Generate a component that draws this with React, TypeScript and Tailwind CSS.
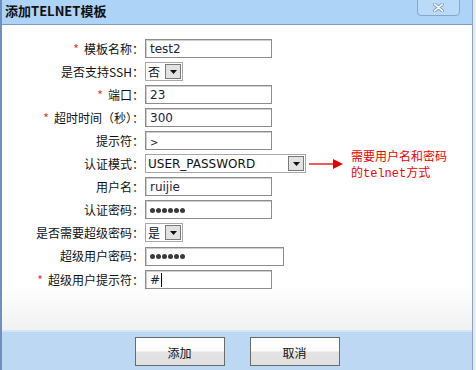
import { ReactNode } from 'react'

const cjk = { fontFamily: '"Noto Sans CJK SC", "DejaVu Sans", sans-serif' }
const latin = { fontFamily: '"DejaVu Sans", "Noto Sans CJK SC", sans-serif' }

function Label({ required, children }: { required?: boolean; children: ReactNode }) {
  return (
    <div className="w-[142px] shrink-0 text-right text-[12px] leading-none text-[#111] whitespace-nowrap" style={cjk}>
      {required && <span className="text-[#e33] mr-[5px]">*</span>}
      {children}：
    </div>
  )
}

function TextBox({ width, children }: { width: number; children?: ReactNode }) {
  return (
    <div
      className="h-[19px] border border-[#8c8c8c] bg-white shadow-[inset_1px_1px_0_#cfcfcf] flex items-center pl-[4px] text-[12px] text-[#1c2244]"
      style={{ ...latin, width }}
    >
      {children}
    </div>
  )
}

function Dots() {
  return (
    <div className="flex gap-[1px] pt-[1px]">
      {[0, 1, 2, 3, 4, 5].map(i => (
        <span key={i} className="w-[5px] h-[5px] rounded-full bg-[#3a3a3a]" />
      ))}
    </div>
  )
}

function Select({ width, value }: { width: number; value: string }) {
  return (
    <div className="h-[19px] border border-[#a8a8a8] bg-white flex items-center" style={{ width }}>
      <div className="flex-1 pl-[2px] text-[12px] text-[#111] leading-none whitespace-nowrap" style={value.length > 2 ? latin : cjk}>
        {value}
      </div>
      <div className="w-[16px] h-[15px] mr-[1px] border border-[#7a7a7a] bg-[#e2e2e2] flex items-center justify-center">
        <svg width="7" height="4" viewBox="0 0 7 4">
          <path d="M0 0h7L3.5 4z" fill="#111" />
        </svg>
      </div>
    </div>
  )
}

function Row({ children, h = 'h-[23px]' }: { children: ReactNode; h?: string }) {
  return <div className={`flex items-center ${h}`}>{children}</div>
}

function Button({ children }: { children: ReactNode }) {
  return (
    <button
      className="w-[90px] h-[29px] border border-[#6a6a6a] bg-[linear-gradient(#ffffff_0%,#fbfbfb_48%,#e3e3e3_52%,#e0e0e0_100%)] text-[12px] text-[#111] pt-[3px]"
      style={cjk}
    >
      {children}
    </button>
  )
}

export default function App() {
  return (
    <div className="w-[476px] h-[370px] flex bg-[#ecebe6] overflow-hidden">
      <div className="w-[473px] h-full flex flex-col border-l-2 border-r border-l-[#6f90bf] border-r-[#8aa4c6]">
        {/* Title bar */}
        <div className="h-[25px] shrink-0 bg-[#add3f7] border-b border-[#7f9cc0] flex items-start justify-between">
          <div className="pl-[3px] pt-[2px] text-[13px] font-bold text-[#111] leading-[18px]" style={cjk}>
            添加TELNET模板
          </div>
          <div className="w-[43px] h-[17px] mr-[12px] -mt-px border border-[#86a6cc] rounded-b-[4px] bg-[#b9daf8] flex items-center justify-center">
            <svg width="11" height="9" viewBox="0 0 11 9">
              <path d="M1.5 1l8 7M9.5 1l-8 7" stroke="#7e9ec4" strokeWidth="3.4" strokeLinecap="round" />
              <path d="M1.5 1l8 7M9.5 1l-8 7" stroke="#ffffff" strokeWidth="1.6" strokeLinecap="round" />
            </svg>
          </div>
        </div>

        {/* Form body */}
        <div className="relative flex-1 bg-[linear-gradient(#ffffff_0%,#ffffff_85%,#f1f1f1_100%)] pt-[12px]">
          <Row>
            <Label required>模板名称</Label>
            <div className="ml-[1px]"><TextBox width={127}>test2</TextBox></div>
          </Row>
          <Row>
            <Label>是否支持SSH</Label>
            <div className="ml-[1px]"><Select width={38} value="否" /></div>
          </Row>
          <Row>
            <Label required>端口</Label>
            <div className="ml-[1px]"><TextBox width={127}>23</TextBox></div>
          </Row>
          <Row>
            <Label required>超时时间（秒）</Label>
            <div className="ml-[1px]"><TextBox width={127}>300</TextBox></div>
          </Row>
          <Row>
            <Label>提示符</Label>
            <div className="ml-[1px]"><TextBox width={127}><span className="text-[10px] pt-[3px]">&gt;</span></TextBox></div>
          </Row>
          <Row>
            <Label>认证模式</Label>
            <div className="ml-[1px]"><Select width={161} value="USER_PASSWORD" /></div>
          </Row>
          <Row>
            <Label>用户名</Label>
            <div className="ml-[1px]"><TextBox width={127}>ruijie</TextBox></div>
          </Row>
          <Row>
            <Label>认证密码</Label>
            <div className="ml-[1px]"><TextBox width={127}><Dots /></TextBox></div>
          </Row>
          <Row>
            <Label>是否需要超级密码</Label>
            <div className="ml-[1px]"><Select width={38} value="是" /></div>
          </Row>
          <Row h="h-[24px]">
            <Label>超级用户密码</Label>
            <div className="ml-[1px]"><TextBox width={139}><Dots /></TextBox></div>
          </Row>
          <Row>
            <Label required>超级用户提示符</Label>
            <div className="ml-[1px]">
              <TextBox width={127}>
                #<span className="w-px h-[14px] bg-black ml-px" />
              </TextBox>
            </div>
          </Row>

          {/* Annotation */}
          <div className="absolute left-[307px] top-[132px] flex items-start">
            <svg width="36" height="12" viewBox="0 0 36 12" className="mt-[1px]">
              <path d="M0 6h26" stroke="#e60000" strokeWidth="1.3" />
              <path d="M24 1l10 5-10 5z" fill="#e60000" />
            </svg>
            <div className="ml-[6px] text-[12px] leading-[16px] text-[#f00000] -mt-[9px]" style={cjk}>
              <div>需要用户名和密码</div>
              <div>
                的<span style={{ fontFamily: '"Liberation Mono", monospace' }}>telnet</span>方式
              </div>
            </div>
          </div>
        </div>

        {/* Footer */}
        <div className="h-[40px] shrink-0 border-t-2 border-[#d3e5f7] bg-[#bdd8f2] flex justify-center gap-[25px] pt-[5px]">
          <Button>添加</Button>
          <Button>取消</Button>
        </div>
      </div>
    </div>
  )
}
